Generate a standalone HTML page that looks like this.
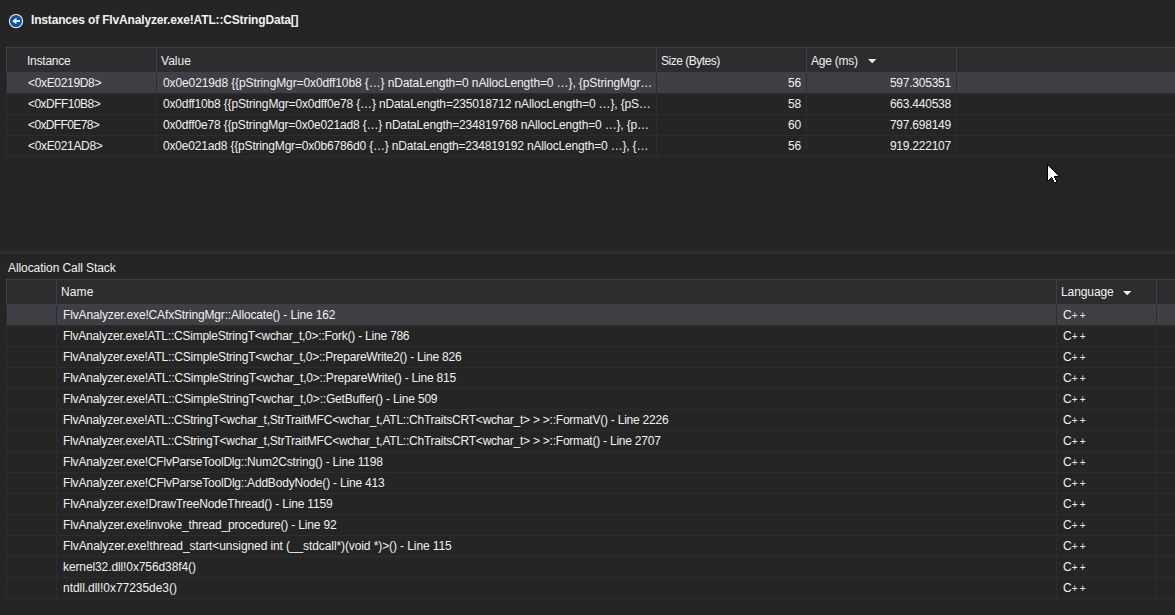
<!DOCTYPE html>
<html><head><meta charset="utf-8"><style>
html,body{margin:0;padding:0;width:1175px;height:615px;overflow:hidden;background:#252526;}
body{position:relative;font-family:"Liberation Sans",sans-serif;font-size:12px;color:#f1f1f1;}
body>div{position:absolute;}
.t{white-space:pre;line-height:21px;}
</style></head><body>
<svg style="position:absolute;left:8px;top:13px" width="16" height="16" viewBox="0 0 16 16">
<circle cx="8" cy="8.1" r="6.6" fill="#0b52a2" stroke="#f4f4f4" stroke-width="1.1"/>
<path d="M4.2 8 L7.9 4.9 L9.1 6 L7.6 7.05 L11.9 7.05 L11.9 9 L7.6 9 L9.1 10.1 L7.9 11.1 Z" fill="#f4f4f4"/>
</svg>
<div class="t" id="title" style="left:31px;top:10px;letter-spacing:-0.165px;font-weight:bold">Instances of FlvAnalyzer.exe!ATL::CStringData[]</div>
<div style="left:6px;top:47px;width:1169px;height:1px;background:#3f3f46"></div>
<div style="left:6px;top:47px;width:1px;height:26px;background:#3f3f46"></div>
<div style="left:7px;top:48px;width:1168px;height:24px;background:#2d2d30"></div>
<div style="left:7px;top:72px;width:1168px;height:1px;background:#3f3f46"></div>
<div style="left:156px;top:48px;width:1px;height:25px;background:#3f3f46"></div>
<div style="left:656px;top:48px;width:1px;height:25px;background:#3f3f46"></div>
<div style="left:806px;top:48px;width:1px;height:25px;background:#3f3f46"></div>
<div style="left:956px;top:48px;width:1px;height:25px;background:#3f3f46"></div>
<div class="t" id="h_inst" style="left:27px;top:49px;letter-spacing:-0.230px;line-height:24px">Instance</div>
<div class="t" id="h_val" style="left:161px;top:49px;letter-spacing:0.020px;line-height:24px">Value</div>
<div class="t" id="h_size" style="left:661px;top:49px;letter-spacing:-0.503px;line-height:24px">Size (Bytes)</div>
<div class="t" id="h_age" style="left:811px;top:49px;letter-spacing:-0.230px;line-height:24px">Age (ms)</div>
<svg style="position:absolute;left:868px;top:59px" width="9" height="5" viewBox="0 0 9 5"><path d="M0 0 L8.4 0 L4.2 4.2 Z" fill="#f1f1f1"/></svg>
<div style="left:6px;top:73px;width:1169px;height:20px;background:#3f3f46"></div>
<div style="left:6px;top:93px;width:1169px;height:1px;background:#2d2d30"></div>
<div style="left:156px;top:73px;width:1px;height:20px;background:#2d2d30"></div>
<div style="left:656px;top:73px;width:1px;height:20px;background:#2d2d30"></div>
<div style="left:806px;top:73px;width:1px;height:20px;background:#2d2d30"></div>
<div style="left:956px;top:73px;width:1px;height:20px;background:#2d2d30"></div>
<div class="t" id="i0" style="left:28px;top:73px;letter-spacing:-0.330px;">&lt;0xE0219D8&gt;</div>
<div class="t" id="v0" style="left:163px;top:73px;letter-spacing:-0.110px;">0x0e0219d8 {{pStringMgr=0x0dff10b8 {…} nDataLength=0 nAllocLength=0 …}, {pStringMgr…</div>
<div class="t" id="s0" style="left:656px;top:73px;letter-spacing:-0.230px;width:145px;text-align:right">56</div>
<div class="t" id="a0" style="left:806px;top:73px;letter-spacing:-0.230px;width:145px;text-align:right">597.305351</div>
<div style="left:6px;top:114px;width:1169px;height:1px;background:#2d2d30"></div>
<div style="left:156px;top:94px;width:1px;height:20px;background:#2d2d30"></div>
<div style="left:656px;top:94px;width:1px;height:20px;background:#2d2d30"></div>
<div style="left:806px;top:94px;width:1px;height:20px;background:#2d2d30"></div>
<div style="left:956px;top:94px;width:1px;height:20px;background:#2d2d30"></div>
<div class="t" id="i1" style="left:28px;top:94px;letter-spacing:-0.530px;">&lt;0xDFF10B8&gt;</div>
<div class="t" id="v1" style="left:163px;top:94px;letter-spacing:-0.158px;">0x0dff10b8 {{pStringMgr=0x0dff0e78 {…} nDataLength=235018712 nAllocLength=0 …}, {pS…</div>
<div class="t" id="s1" style="left:656px;top:94px;letter-spacing:-0.230px;width:145px;text-align:right">58</div>
<div class="t" id="a1" style="left:806px;top:94px;letter-spacing:-0.230px;width:145px;text-align:right">663.440538</div>
<div style="left:6px;top:135px;width:1169px;height:1px;background:#2d2d30"></div>
<div style="left:156px;top:115px;width:1px;height:20px;background:#2d2d30"></div>
<div style="left:656px;top:115px;width:1px;height:20px;background:#2d2d30"></div>
<div style="left:806px;top:115px;width:1px;height:20px;background:#2d2d30"></div>
<div style="left:956px;top:115px;width:1px;height:20px;background:#2d2d30"></div>
<div class="t" id="i2" style="left:28px;top:115px;letter-spacing:-0.630px;">&lt;0xDFF0E78&gt;</div>
<div class="t" id="v2" style="left:163px;top:115px;letter-spacing:-0.169px;">0x0dff0e78 {{pStringMgr=0x0e021ad8 {…} nDataLength=234819768 nAllocLength=0 …}, {p…</div>
<div class="t" id="s2" style="left:656px;top:115px;letter-spacing:-0.230px;width:145px;text-align:right">60</div>
<div class="t" id="a2" style="left:806px;top:115px;letter-spacing:-0.230px;width:145px;text-align:right">797.698149</div>
<div style="left:6px;top:156px;width:1169px;height:1px;background:#2d2d30"></div>
<div style="left:156px;top:136px;width:1px;height:20px;background:#2d2d30"></div>
<div style="left:656px;top:136px;width:1px;height:20px;background:#2d2d30"></div>
<div style="left:806px;top:136px;width:1px;height:20px;background:#2d2d30"></div>
<div style="left:956px;top:136px;width:1px;height:20px;background:#2d2d30"></div>
<div class="t" id="i3" style="left:28px;top:136px;letter-spacing:-0.330px;">&lt;0xE021AD8&gt;</div>
<div class="t" id="v3" style="left:163px;top:136px;letter-spacing:-0.181px;">0x0e021ad8 {{pStringMgr=0x0b6786d0 {…} nDataLength=234819192 nAllocLength=0 …}, {…</div>
<div class="t" id="s3" style="left:656px;top:136px;letter-spacing:-0.230px;width:145px;text-align:right">56</div>
<div class="t" id="a3" style="left:806px;top:136px;letter-spacing:-0.230px;width:145px;text-align:right">919.222107</div>
<div style="left:6px;top:73px;width:1px;height:84px;background:#2d2d30"></div>
<div style="left:0px;top:251px;width:1175px;height:3px;background:#2d2d30"></div>
<div class="t" id="acs" style="left:8px;top:258px;letter-spacing:-0.080px;">Allocation Call Stack</div>
<div style="left:6px;top:279px;width:1169px;height:1px;background:#3f3f46"></div>
<div style="left:6px;top:279px;width:1px;height:26px;background:#3f3f46"></div>
<div style="left:7px;top:280px;width:1168px;height:24px;background:#2d2d30"></div>
<div style="left:7px;top:304px;width:1168px;height:1px;background:#3f3f46"></div>
<div style="left:56px;top:280px;width:1px;height:25px;background:#3f3f46"></div>
<div style="left:1056px;top:280px;width:1px;height:25px;background:#3f3f46"></div>
<div style="left:1156px;top:280px;width:1px;height:25px;background:#3f3f46"></div>
<div class="t" id="h_name" style="left:61px;top:280px;letter-spacing:0.103px;line-height:24px">Name</div>
<div class="t" id="h_lang" style="left:1061px;top:280px;letter-spacing:-0.087px;line-height:24px">Language</div>
<svg style="position:absolute;left:1123px;top:291px" width="9" height="5" viewBox="0 0 9 5"><path d="M0 0 L8.4 0 L4.2 4.2 Z" fill="#f1f1f1"/></svg>
<div style="left:6px;top:305px;width:1169px;height:20px;background:#3f3f46"></div>
<div style="left:6px;top:325px;width:1169px;height:1px;background:#2d2d30"></div>
<div style="left:56px;top:305px;width:1px;height:20px;background:#2d2d30"></div>
<div style="left:1056px;top:305px;width:1px;height:20px;background:#2d2d30"></div>
<div style="left:1156px;top:305px;width:1px;height:20px;background:#2d2d30"></div>
<div class="t" id="n0" style="left:63px;top:305px;letter-spacing:-0.152px;">FlvAnalyzer.exe!CAfxStringMgr::Allocate() - Line 162</div>
<div class="t" id="l0" style="left:1063px;top:305px">C<span style="font-size:10px;letter-spacing:2.200px;position:relative;top:0px">++</span></div>
<div style="left:6px;top:346px;width:1169px;height:1px;background:#2d2d30"></div>
<div style="left:56px;top:326px;width:1px;height:20px;background:#2d2d30"></div>
<div style="left:1056px;top:326px;width:1px;height:20px;background:#2d2d30"></div>
<div style="left:1156px;top:326px;width:1px;height:20px;background:#2d2d30"></div>
<div class="t" id="n1" style="left:63px;top:326px;letter-spacing:-0.230px;">FlvAnalyzer.exe!ATL::CSimpleStringT&lt;wchar_t,0&gt;::Fork() - Line 786</div>
<div class="t" id="l1" style="left:1063px;top:326px">C<span style="font-size:10px;letter-spacing:2.200px;position:relative;top:0px">++</span></div>
<div style="left:6px;top:367px;width:1169px;height:1px;background:#2d2d30"></div>
<div style="left:56px;top:347px;width:1px;height:20px;background:#2d2d30"></div>
<div style="left:1056px;top:347px;width:1px;height:20px;background:#2d2d30"></div>
<div style="left:1156px;top:347px;width:1px;height:20px;background:#2d2d30"></div>
<div class="t" id="n2" style="left:63px;top:347px;letter-spacing:-0.216px;">FlvAnalyzer.exe!ATL::CSimpleStringT&lt;wchar_t,0&gt;::PrepareWrite2() - Line 826</div>
<div class="t" id="l2" style="left:1063px;top:347px">C<span style="font-size:10px;letter-spacing:2.200px;position:relative;top:0px">++</span></div>
<div style="left:6px;top:388px;width:1169px;height:1px;background:#2d2d30"></div>
<div style="left:56px;top:368px;width:1px;height:20px;background:#2d2d30"></div>
<div style="left:1056px;top:368px;width:1px;height:20px;background:#2d2d30"></div>
<div style="left:1156px;top:368px;width:1px;height:20px;background:#2d2d30"></div>
<div class="t" id="n3" style="left:63px;top:368px;letter-spacing:-0.202px;">FlvAnalyzer.exe!ATL::CSimpleStringT&lt;wchar_t,0&gt;::PrepareWrite() - Line 815</div>
<div class="t" id="l3" style="left:1063px;top:368px">C<span style="font-size:10px;letter-spacing:2.200px;position:relative;top:0px">++</span></div>
<div style="left:6px;top:409px;width:1169px;height:1px;background:#2d2d30"></div>
<div style="left:56px;top:389px;width:1px;height:20px;background:#2d2d30"></div>
<div style="left:1056px;top:389px;width:1px;height:20px;background:#2d2d30"></div>
<div style="left:1156px;top:389px;width:1px;height:20px;background:#2d2d30"></div>
<div class="t" id="n4" style="left:63px;top:389px;letter-spacing:-0.201px;">FlvAnalyzer.exe!ATL::CSimpleStringT&lt;wchar_t,0&gt;::GetBuffer() - Line 509</div>
<div class="t" id="l4" style="left:1063px;top:389px">C<span style="font-size:10px;letter-spacing:2.200px;position:relative;top:0px">++</span></div>
<div style="left:6px;top:430px;width:1169px;height:1px;background:#2d2d30"></div>
<div style="left:56px;top:410px;width:1px;height:20px;background:#2d2d30"></div>
<div style="left:1056px;top:410px;width:1px;height:20px;background:#2d2d30"></div>
<div style="left:1156px;top:410px;width:1px;height:20px;background:#2d2d30"></div>
<div class="t" id="n5" style="left:63px;top:410px;letter-spacing:-0.230px;">FlvAnalyzer.exe!ATL::CStringT&lt;wchar_t,StrTraitMFC&lt;wchar_t,ATL::ChTraitsCRT&lt;wchar_t&gt; &gt; &gt;::FormatV() - Line 2226</div>
<div class="t" id="l5" style="left:1063px;top:410px">C<span style="font-size:10px;letter-spacing:2.200px;position:relative;top:0px">++</span></div>
<div style="left:6px;top:451px;width:1169px;height:1px;background:#2d2d30"></div>
<div style="left:56px;top:431px;width:1px;height:20px;background:#2d2d30"></div>
<div style="left:1056px;top:431px;width:1px;height:20px;background:#2d2d30"></div>
<div style="left:1156px;top:431px;width:1px;height:20px;background:#2d2d30"></div>
<div class="t" id="n6" style="left:63px;top:431px;letter-spacing:-0.230px;">FlvAnalyzer.exe!ATL::CStringT&lt;wchar_t,StrTraitMFC&lt;wchar_t,ATL::ChTraitsCRT&lt;wchar_t&gt; &gt; &gt;::Format() - Line 2707</div>
<div class="t" id="l6" style="left:1063px;top:431px">C<span style="font-size:10px;letter-spacing:2.200px;position:relative;top:0px">++</span></div>
<div style="left:6px;top:472px;width:1169px;height:1px;background:#2d2d30"></div>
<div style="left:56px;top:452px;width:1px;height:20px;background:#2d2d30"></div>
<div style="left:1056px;top:452px;width:1px;height:20px;background:#2d2d30"></div>
<div style="left:1156px;top:452px;width:1px;height:20px;background:#2d2d30"></div>
<div class="t" id="n7" style="left:63px;top:452px;letter-spacing:-0.196px;">FlvAnalyzer.exe!CFlvParseToolDlg::Num2Cstring() - Line 1198</div>
<div class="t" id="l7" style="left:1063px;top:452px">C<span style="font-size:10px;letter-spacing:2.200px;position:relative;top:0px">++</span></div>
<div style="left:6px;top:493px;width:1169px;height:1px;background:#2d2d30"></div>
<div style="left:56px;top:473px;width:1px;height:20px;background:#2d2d30"></div>
<div style="left:1056px;top:473px;width:1px;height:20px;background:#2d2d30"></div>
<div style="left:1156px;top:473px;width:1px;height:20px;background:#2d2d30"></div>
<div class="t" id="n8" style="left:63px;top:473px;letter-spacing:-0.195px;">FlvAnalyzer.exe!CFlvParseToolDlg::AddBodyNode() - Line 413</div>
<div class="t" id="l8" style="left:1063px;top:473px">C<span style="font-size:10px;letter-spacing:2.200px;position:relative;top:0px">++</span></div>
<div style="left:6px;top:514px;width:1169px;height:1px;background:#2d2d30"></div>
<div style="left:56px;top:494px;width:1px;height:20px;background:#2d2d30"></div>
<div style="left:1056px;top:494px;width:1px;height:20px;background:#2d2d30"></div>
<div style="left:1156px;top:494px;width:1px;height:20px;background:#2d2d30"></div>
<div class="t" id="n9" style="left:63px;top:494px;letter-spacing:-0.166px;">FlvAnalyzer.exe!DrawTreeNodeThread() - Line 1159</div>
<div class="t" id="l9" style="left:1063px;top:494px">C<span style="font-size:10px;letter-spacing:2.200px;position:relative;top:0px">++</span></div>
<div style="left:6px;top:535px;width:1169px;height:1px;background:#2d2d30"></div>
<div style="left:56px;top:515px;width:1px;height:20px;background:#2d2d30"></div>
<div style="left:1056px;top:515px;width:1px;height:20px;background:#2d2d30"></div>
<div style="left:1156px;top:515px;width:1px;height:20px;background:#2d2d30"></div>
<div class="t" id="n10" style="left:63px;top:515px;letter-spacing:-0.170px;">FlvAnalyzer.exe!invoke_thread_procedure() - Line 92</div>
<div class="t" id="l10" style="left:1063px;top:515px">C<span style="font-size:10px;letter-spacing:2.200px;position:relative;top:0px">++</span></div>
<div style="left:6px;top:556px;width:1169px;height:1px;background:#2d2d30"></div>
<div style="left:56px;top:536px;width:1px;height:20px;background:#2d2d30"></div>
<div style="left:1056px;top:536px;width:1px;height:20px;background:#2d2d30"></div>
<div style="left:1156px;top:536px;width:1px;height:20px;background:#2d2d30"></div>
<div class="t" id="n11" style="left:63px;top:536px;letter-spacing:-0.097px;">FlvAnalyzer.exe!thread_start&lt;unsigned int (__stdcall*)(void *)&gt;() - Line 115</div>
<div class="t" id="l11" style="left:1063px;top:536px">C<span style="font-size:10px;letter-spacing:2.200px;position:relative;top:0px">++</span></div>
<div style="left:6px;top:577px;width:1169px;height:1px;background:#2d2d30"></div>
<div style="left:56px;top:557px;width:1px;height:20px;background:#2d2d30"></div>
<div style="left:1056px;top:557px;width:1px;height:20px;background:#2d2d30"></div>
<div style="left:1156px;top:557px;width:1px;height:20px;background:#2d2d30"></div>
<div class="t" id="n12" style="left:63px;top:557px;letter-spacing:-0.105px;">kernel32.dll!0x756d38f4()</div>
<div class="t" id="l12" style="left:1063px;top:557px">C<span style="font-size:10px;letter-spacing:2.200px;position:relative;top:0px">++</span></div>
<div style="left:6px;top:598px;width:1169px;height:1px;background:#2d2d30"></div>
<div style="left:56px;top:578px;width:1px;height:20px;background:#2d2d30"></div>
<div style="left:1056px;top:578px;width:1px;height:20px;background:#2d2d30"></div>
<div style="left:1156px;top:578px;width:1px;height:20px;background:#2d2d30"></div>
<div class="t" id="n13" style="left:63px;top:578px;letter-spacing:-0.040px;">ntdll.dll!0x77235de3()</div>
<div class="t" id="l13" style="left:1063px;top:578px">C<span style="font-size:10px;letter-spacing:2.200px;position:relative;top:0px">++</span></div>
<div style="left:6px;top:305px;width:1px;height:294px;background:#2d2d30"></div>
<svg style="position:absolute;left:1047px;top:164px" width="12" height="19" viewBox="0 0 12 19" shape-rendering="crispEdges"><rect x="0" y="0" width="1" height="1" fill="#000"/><rect x="0" y="1" width="1" height="1" fill="#000"/><rect x="1" y="1" width="1" height="1" fill="#000"/><rect x="0" y="2" width="1" height="1" fill="#000"/><rect x="1" y="2" width="1" height="1" fill="#fff"/><rect x="2" y="2" width="1" height="1" fill="#000"/><rect x="0" y="3" width="1" height="1" fill="#000"/><rect x="1" y="3" width="1" height="1" fill="#fff"/><rect x="2" y="3" width="1" height="1" fill="#fff"/><rect x="3" y="3" width="1" height="1" fill="#000"/><rect x="0" y="4" width="1" height="1" fill="#000"/><rect x="1" y="4" width="1" height="1" fill="#fff"/><rect x="2" y="4" width="1" height="1" fill="#fff"/><rect x="3" y="4" width="1" height="1" fill="#fff"/><rect x="4" y="4" width="1" height="1" fill="#000"/><rect x="0" y="5" width="1" height="1" fill="#000"/><rect x="1" y="5" width="1" height="1" fill="#fff"/><rect x="2" y="5" width="1" height="1" fill="#fff"/><rect x="3" y="5" width="1" height="1" fill="#fff"/><rect x="4" y="5" width="1" height="1" fill="#fff"/><rect x="5" y="5" width="1" height="1" fill="#000"/><rect x="0" y="6" width="1" height="1" fill="#000"/><rect x="1" y="6" width="1" height="1" fill="#fff"/><rect x="2" y="6" width="1" height="1" fill="#fff"/><rect x="3" y="6" width="1" height="1" fill="#fff"/><rect x="4" y="6" width="1" height="1" fill="#fff"/><rect x="5" y="6" width="1" height="1" fill="#fff"/><rect x="6" y="6" width="1" height="1" fill="#000"/><rect x="0" y="7" width="1" height="1" fill="#000"/><rect x="1" y="7" width="1" height="1" fill="#fff"/><rect x="2" y="7" width="1" height="1" fill="#fff"/><rect x="3" y="7" width="1" height="1" fill="#fff"/><rect x="4" y="7" width="1" height="1" fill="#fff"/><rect x="5" y="7" width="1" height="1" fill="#fff"/><rect x="6" y="7" width="1" height="1" fill="#fff"/><rect x="7" y="7" width="1" height="1" fill="#000"/><rect x="0" y="8" width="1" height="1" fill="#000"/><rect x="1" y="8" width="1" height="1" fill="#fff"/><rect x="2" y="8" width="1" height="1" fill="#fff"/><rect x="3" y="8" width="1" height="1" fill="#fff"/><rect x="4" y="8" width="1" height="1" fill="#fff"/><rect x="5" y="8" width="1" height="1" fill="#fff"/><rect x="6" y="8" width="1" height="1" fill="#fff"/><rect x="7" y="8" width="1" height="1" fill="#fff"/><rect x="8" y="8" width="1" height="1" fill="#000"/><rect x="0" y="9" width="1" height="1" fill="#000"/><rect x="1" y="9" width="1" height="1" fill="#fff"/><rect x="2" y="9" width="1" height="1" fill="#fff"/><rect x="3" y="9" width="1" height="1" fill="#fff"/><rect x="4" y="9" width="1" height="1" fill="#fff"/><rect x="5" y="9" width="1" height="1" fill="#fff"/><rect x="6" y="9" width="1" height="1" fill="#fff"/><rect x="7" y="9" width="1" height="1" fill="#fff"/><rect x="8" y="9" width="1" height="1" fill="#fff"/><rect x="9" y="9" width="1" height="1" fill="#000"/><rect x="0" y="10" width="1" height="1" fill="#000"/><rect x="1" y="10" width="1" height="1" fill="#fff"/><rect x="2" y="10" width="1" height="1" fill="#fff"/><rect x="3" y="10" width="1" height="1" fill="#fff"/><rect x="4" y="10" width="1" height="1" fill="#fff"/><rect x="5" y="10" width="1" height="1" fill="#fff"/><rect x="6" y="10" width="1" height="1" fill="#fff"/><rect x="7" y="10" width="1" height="1" fill="#fff"/><rect x="8" y="10" width="1" height="1" fill="#fff"/><rect x="9" y="10" width="1" height="1" fill="#fff"/><rect x="10" y="10" width="1" height="1" fill="#000"/><rect x="0" y="11" width="1" height="1" fill="#000"/><rect x="1" y="11" width="1" height="1" fill="#fff"/><rect x="2" y="11" width="1" height="1" fill="#fff"/><rect x="3" y="11" width="1" height="1" fill="#fff"/><rect x="4" y="11" width="1" height="1" fill="#fff"/><rect x="5" y="11" width="1" height="1" fill="#fff"/><rect x="6" y="11" width="1" height="1" fill="#fff"/><rect x="7" y="11" width="1" height="1" fill="#fff"/><rect x="8" y="11" width="1" height="1" fill="#fff"/><rect x="9" y="11" width="1" height="1" fill="#fff"/><rect x="10" y="11" width="1" height="1" fill="#fff"/><rect x="11" y="11" width="1" height="1" fill="#000"/><rect x="0" y="12" width="1" height="1" fill="#000"/><rect x="1" y="12" width="1" height="1" fill="#fff"/><rect x="2" y="12" width="1" height="1" fill="#fff"/><rect x="3" y="12" width="1" height="1" fill="#fff"/><rect x="4" y="12" width="1" height="1" fill="#fff"/><rect x="5" y="12" width="1" height="1" fill="#fff"/><rect x="6" y="12" width="1" height="1" fill="#fff"/><rect x="7" y="12" width="1" height="1" fill="#000"/><rect x="8" y="12" width="1" height="1" fill="#000"/><rect x="9" y="12" width="1" height="1" fill="#000"/><rect x="10" y="12" width="1" height="1" fill="#000"/><rect x="11" y="12" width="1" height="1" fill="#000"/><rect x="0" y="13" width="1" height="1" fill="#000"/><rect x="1" y="13" width="1" height="1" fill="#fff"/><rect x="2" y="13" width="1" height="1" fill="#fff"/><rect x="3" y="13" width="1" height="1" fill="#fff"/><rect x="4" y="13" width="1" height="1" fill="#000"/><rect x="5" y="13" width="1" height="1" fill="#fff"/><rect x="6" y="13" width="1" height="1" fill="#fff"/><rect x="7" y="13" width="1" height="1" fill="#000"/><rect x="0" y="14" width="1" height="1" fill="#000"/><rect x="1" y="14" width="1" height="1" fill="#fff"/><rect x="2" y="14" width="1" height="1" fill="#fff"/><rect x="3" y="14" width="1" height="1" fill="#000"/><rect x="5" y="14" width="1" height="1" fill="#000"/><rect x="6" y="14" width="1" height="1" fill="#fff"/><rect x="7" y="14" width="1" height="1" fill="#fff"/><rect x="8" y="14" width="1" height="1" fill="#000"/><rect x="0" y="15" width="1" height="1" fill="#000"/><rect x="1" y="15" width="1" height="1" fill="#fff"/><rect x="2" y="15" width="1" height="1" fill="#000"/><rect x="5" y="15" width="1" height="1" fill="#000"/><rect x="6" y="15" width="1" height="1" fill="#fff"/><rect x="7" y="15" width="1" height="1" fill="#fff"/><rect x="8" y="15" width="1" height="1" fill="#000"/><rect x="0" y="16" width="1" height="1" fill="#000"/><rect x="1" y="16" width="1" height="1" fill="#000"/><rect x="6" y="16" width="1" height="1" fill="#000"/><rect x="7" y="16" width="1" height="1" fill="#fff"/><rect x="8" y="16" width="1" height="1" fill="#fff"/><rect x="9" y="16" width="1" height="1" fill="#000"/><rect x="6" y="17" width="1" height="1" fill="#000"/><rect x="7" y="17" width="1" height="1" fill="#fff"/><rect x="8" y="17" width="1" height="1" fill="#fff"/><rect x="9" y="17" width="1" height="1" fill="#000"/><rect x="7" y="18" width="1" height="1" fill="#000"/><rect x="8" y="18" width="1" height="1" fill="#000"/></svg>
</body></html>
